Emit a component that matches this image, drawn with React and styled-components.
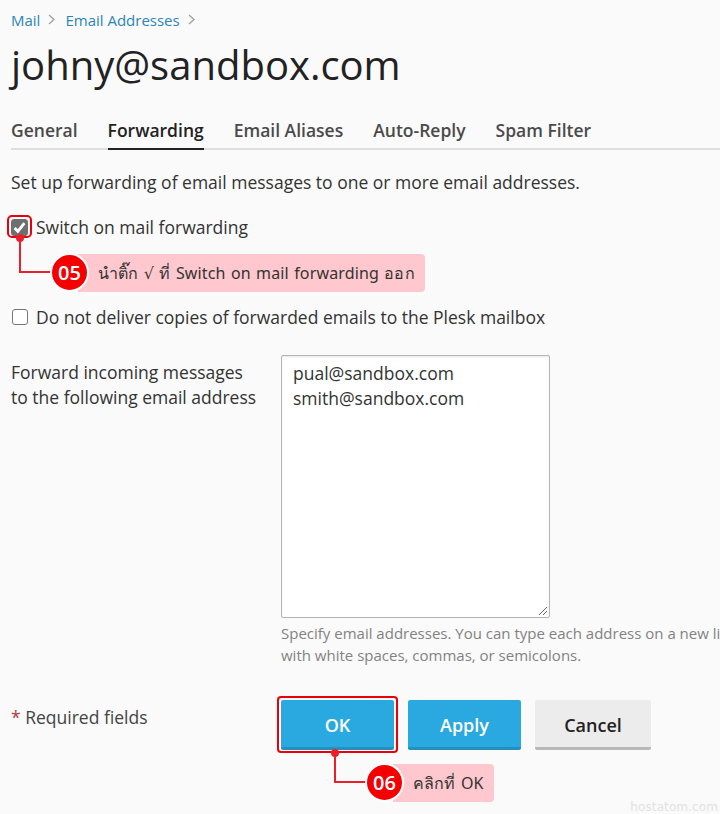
import * as React from "react"
import styled, { createGlobalStyle } from "styled-components"

const GlobalStyle = createGlobalStyle`
  html, body {
    margin: 0;
    padding: 0;
    background: #fafafa;
  }
  body {
    font-family: "Open Sans", "Noto Sans", sans-serif;
    color: #333;
  }
`

const Page = styled.div`
  position: relative;
  width: 720px;
  height: 814px;
  padding: 11px 0 0 11px;
  box-sizing: border-box;
  overflow: hidden;
`

const Breadcrumbs = styled.nav`
  display: flex;
  align-items: center;
  height: 17px;
  font-size: 15px;
  color: #9a9a9a;
`

const Crumb = styled.a`
  color: #2a86b5;
`

const CrumbArrow = styled.svg`
  width: 7px;
  height: 11px;
  margin: 0 10px 0 8px;
  fill: none;
  stroke: #a0a0a0;
  stroke-width: 1.3;
`

const Title = styled.h1`
  margin: 12px 0 0;
  font-size: 40px;
  line-height: 50px;
  font-weight: 400;
  color: #222;
`

const Tabs = styled.div`
  display: flex;
  gap: 30px;
  margin-top: 22px;
  box-sizing: border-box;
  border-bottom: 2px solid #dedede;
  height: 38px;
`

const Tab = styled.div`
  height: 38px;
  box-sizing: border-box;
  font-size: 17.5px;
  line-height: 37px;
  font-weight: 600;
  color: ${(p) => (p.$active ? "#222" : "#4a4a4a")};
  border-bottom: ${(p) => (p.$active ? "2px solid #222" : "none")};
`

const Intro = styled.p`
  margin: 20px 0 0;
  font-size: 17.5px;
  line-height: 24px;
  color: #333;
`

const CheckRow = styled.label`
  display: flex;
  align-items: center;
  gap: 8px;
  margin-top: ${(p) => p.$top}px;
  height: 24px;
  font-size: 17.5px;
  color: #333;
`

const Box = styled.span`
  display: flex;
  align-items: center;
  justify-content: center;
  width: ${(p) => (p.$checked ? 17 : 16)}px;
  height: ${(p) => (p.$checked ? 17 : 16)}px;
  box-sizing: border-box;
  margin-left: ${(p) => (p.$checked ? 0 : 1)}px;
  border-radius: 3px;
  background: ${(p) => (p.$checked ? "#6f6f6f" : "#fff")};
  border: 1px solid ${(p) => (p.$checked ? "#6f6f6f" : "#777")};
`

const FieldRow = styled.div`
  display: grid;
  grid-template-columns: 270px 1fr;
  margin-top: ${(p) => p.$top}px;
`

const FieldLabel = styled.div`
  padding-top: 5px;
  font-size: 17.5px;
  line-height: 25px;
  color: #333;
`

const TextBox = styled.div`
  position: relative;
  width: 269px;
  height: 263px;
  box-sizing: border-box;
  padding: 5px 11px;
  background: #fff;
  border: 1px solid #b5b5b5;
  border-radius: 2px;
  box-shadow: inset 0 1px 2px rgba(0, 0, 0, 0.1);
  font-size: 17.5px;
  line-height: 25px;
  color: #333;
`

const Grip = styled.svg`
  position: absolute;
  right: 1px;
  bottom: 1px;
  width: 10px;
  height: 10px;
  stroke: #666;
  stroke-width: 1;
`

const Hint = styled.div`
  margin-top: 4px;
  width: 439px;
  overflow: hidden;
  font-size: 15px;
  line-height: 22px;
  color: #828282;
`

const HintLine = styled.div`
  white-space: nowrap;
`

const Required = styled.div`
  padding-top: 5px;
  font-size: 17.5px;
  line-height: 25px;
  color: #444;
`

const Star = styled.span`
  color: #b03a3a;
`

const Buttons = styled.div`
  display: flex;
  gap: 14px;
`

const Button = styled.div`
  width: ${(p) => p.$w}px;
  height: 50px;
  box-sizing: border-box;
  padding-top: 2px;
  display: flex;
  align-items: center;
  justify-content: center;
  border-radius: 2px;
  font-size: 18px;
  font-weight: 600;
  color: ${(p) => (p.$primary ? "#fff" : "#222")};
  background: ${(p) => (p.$primary ? "#29a9df" : "#ececec")};
  border-bottom: 3px solid ${(p) => (p.$primary ? "#2590bd" : "#b8b8b8")};
`

// the red tutorial marks sit on top of the page
const Highlight = styled.div`
  position: absolute;
  left: ${(p) => p.$x}px;
  top: ${(p) => p.$y}px;
  width: ${(p) => p.$w}px;
  height: ${(p) => p.$h}px;
  box-sizing: border-box;
  border: 2px solid #e9000b;
  border-radius: ${(p) => p.$r}px;
`

const Leader = styled.svg`
  position: absolute;
  left: 0;
  top: 0;
  width: 720px;
  height: 814px;
  pointer-events: none;
`

const Callout = styled.div`
  position: absolute;
  left: ${(p) => p.$x}px;
  top: ${(p) => p.$y}px;
  width: ${(p) => p.$w}px;
  height: 38px;
  box-sizing: border-box;
  display: flex;
  align-items: center;
  padding-left: 20px;
  background: #ffc8ce;
  border-radius: 0 4px 4px 0;
  font-family: "Noto Sans", "DejaVu Sans", sans-serif;
  font-size: 16px;
  letter-spacing: 0.15px;
  word-spacing: 1px;
  color: #333;
  white-space: nowrap;
`

const Badge = styled.div`
  position: absolute;
  left: ${(p) => p.$x}px;
  top: ${(p) => p.$y}px;
  width: 35px;
  height: 35px;
  display: flex;
  align-items: center;
  justify-content: center;
  border-radius: 50%;
  background: #f50000;
  border: 2px solid #fff;
  color: #fff;
  font-size: 20px;
  font-weight: 600;
`

const Watermark = styled.div`
  position: absolute;
  right: 2px;
  bottom: 0;
  font-family: "DejaVu Sans", sans-serif;
  font-size: 12px;
  letter-spacing: 0.1px;
  color: #e2e2e2;
`

function Arrow() {
  return (
    <CrumbArrow viewBox="0 0 7 11">
      <path d="M1 1l5 4.5L1 10" />
    </CrumbArrow>
  )
}

export default function App() {
  return (
    <Page>
      <GlobalStyle />
      <Breadcrumbs>
        <Crumb>Mail</Crumb>
        <Arrow />
        <Crumb>Email Addresses</Crumb>
        <Arrow />
      </Breadcrumbs>
      <Title>johny@sandbox.com</Title>
      <Tabs>
        <Tab>General</Tab>
        <Tab $active>Forwarding</Tab>
        <Tab>Email Aliases</Tab>
        <Tab>Auto-Reply</Tab>
        <Tab>Spam Filter</Tab>
      </Tabs>
      <Intro>Set up forwarding of email messages to one or more email addresses.</Intro>
      <CheckRow $top={21}>
        <Box $checked>
          <svg width="13" height="13" viewBox="0 0 12 12" fill="none" stroke="#fff" strokeWidth="2.6">
            <path d="M1.5 6.5l3 3 6-7.5" />
          </svg>
        </Box>
        Switch on mail forwarding
      </CheckRow>
      <CheckRow $top={66}>
        <Box />
        Do not deliver copies of forwarded emails to the Plesk mailbox
      </CheckRow>
      <FieldRow $top={26}>
        <FieldLabel>
          Forward incoming messages
          <br />
          to the following email address
        </FieldLabel>
        <div>
          <TextBox>
            pual@sandbox.com
            <br />
            smith@sandbox.com
            <Grip viewBox="0 0 10 10">
              <path d="M1 9l8-8M5 9l4-4" />
            </Grip>
          </TextBox>
          <Hint>
            <HintLine>Specify email addresses. You can type each address on a new line or separate them</HintLine>
            <HintLine>with white spaces, commas, or semicolons.</HintLine>
          </Hint>
        </div>
      </FieldRow>
      <FieldRow $top={34}>
        <Required>
          <Star>*</Star> Required fields
        </Required>
        <Buttons>
          <Button $primary $w={113}>OK</Button>
          <Button $primary $w={113}>Apply</Button>
          <Button $w={116}>Cancel</Button>
        </Buttons>
      </FieldRow>

      <Highlight $x={7} $y={215} $w={25} $h={23} $r={5} />
      <Highlight $x={277} $y={696} $w={121} $h={57} $r={4} />
      <Leader viewBox="0 0 720 814">
        <path d="M20 238V272H52" fill="none" stroke="#e9202b" strokeWidth="2" />
        <circle cx="20" cy="238" r="4" fill="#e9202b" />
        <path d="M335 753V782H368" fill="none" stroke="#e9202b" strokeWidth="2" />
        <circle cx="335" cy="753" r="4" fill="#e9202b" />
      </Leader>
      <Callout $x={78} $y={254} $w={347}>นำติ๊ก √ ที่ Switch on mail forwarding ออก</Callout>
      <Badge $x={50} $y={253}>05</Badge>
      <Callout $x={393} $y={764} $w={101}>คลิกที่ OK</Callout>
      <Badge $x={365} $y={763}>06</Badge>
      <Watermark>hostatom.com</Watermark>
    </Page>
  )
}
